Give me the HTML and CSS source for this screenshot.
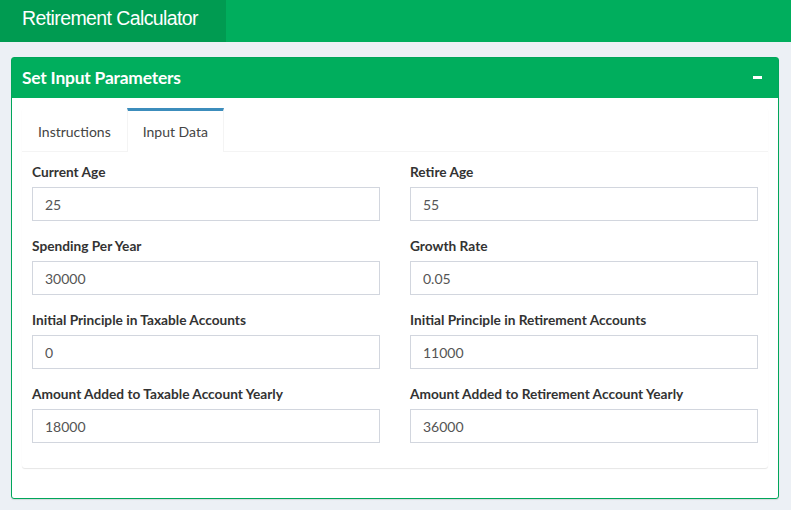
FILE: index.html
```html
<!DOCTYPE html>
<html>
<head>
<meta charset="utf-8">
<link rel="stylesheet" href="styles.css">
</head>
<body>
<header class="topbar">
  <div class="logo">Retirement Calculator</div>
  <div class="navbar"></div>
</header>
<main class="content">
  <section class="box">
    <div class="box-header">
      <h3 class="box-title">Set Input Parameters</h3>
      <span class="minus"></span>
    </div>
    <div class="box-body">
      <div class="tabs">
        <ul class="tab-nav">
          <li class="tab">Instructions</li>
          <li class="tab active">Input Data</li>
        </ul>
        <div class="tab-content">
          <div class="grid">
            <div class="field"><label>Current Age</label><input class="inp" value="25"></div>
            <div class="field"><label>Retire Age</label><input class="inp" value="55"></div>
            <div class="field"><label>Spending Per Year</label><input class="inp" value="30000"></div>
            <div class="field"><label>Growth Rate</label><input class="inp" value="0.05"></div>
            <div class="field"><label>Initial Principle in Taxable Accounts</label><input class="inp" value="0"></div>
            <div class="field"><label>Initial Principle in Retirement Accounts</label><input class="inp" value="11000"></div>
            <div class="field"><label>Amount Added to Taxable Account Yearly</label><input class="inp" value="18000"></div>
            <div class="field"><label>Amount Added to Retirement Account Yearly</label><input class="inp" value="36000"></div>
          </div>
        </div>
      </div>
    </div>
  </section>
</main>
</body>
</html>
```
FILE: styles.css
```css
* { box-sizing: border-box; }
html, body { margin: 0; padding: 0; }
body {
  background: #ecf0f5;
  font-family: "Lato", "Liberation Sans", sans-serif;
  color: #333;
  font-size: 14px;
  width: 791px;
  height: 510px;
  overflow: hidden;
}
.topbar {
  display: flex;
  height: 42px;
  background: #00ae5d;
}
.logo {
  width: 226px;
  background: #009b51;
  color: #fff;
  font-family: "Liberation Sans", sans-serif;
  font-size: 19.5px;
  font-weight: 300;
  line-height: 36px;
  padding-left: 22px;
  letter-spacing: -0.6px;
}
.navbar { flex: 1; }
.content {
  padding: 15px 12px 0 11px;
}
.box {
  border: 1px solid #00a65a;
  border-radius: 3px;
  background: #fff;
  box-shadow: 0 1px 1px rgba(0,0,0,0.1);
}
.box-header {
  background: #00ae5d;
  height: 40px;
  display: flex;
  align-items: center;
  justify-content: space-between;
  padding: 0 16px 2px 10px;
  color: #fff;
}
.box-title {
  margin: 0;
  font-size: 17.4px;
  font-weight: 700;
  letter-spacing: -0.2px;
}
.minus {
  width: 9px;
  height: 3px;
  background: #fff;
}
.box-body {
  padding: 10px 10px 30px 10px;
}
.tabs {
  background: #fff;
  border-radius: 3px;
  box-shadow: 0 1px 1px rgba(0,0,0,0.1);
}
.tab-nav {
  list-style: none;
  margin: 0;
  padding: 0;
  display: flex;
  border-bottom: 1px solid #f4f4f4;
}
.tab {
  padding: 14px 16px 10px 16px;
  line-height: 20px;
  color: #444;
  font-size: 14px;
  margin-bottom: -1px;
}
.tab.active {
  border-top: 3px solid #3c8dbc;
  padding-top: 11px;
  border-left: 1px solid #f4f4f4;
  border-right: 1px solid #f4f4f4;
  background: #fff;
  padding-left: 15px;
  padding-right: 15px;
}
.tab-content {
  padding: 10px;
}
.grid {
  display: grid;
  grid-template-columns: 348px 348px;
  column-gap: 30px;
}
.field {
  display: flex;
  flex-direction: column;
  margin-bottom: 15px;
}
label {
  font-weight: 700;
  font-size: 13.7px;
  line-height: 20px;
  margin-bottom: 5px;
  color: #333;
}
.inp {
  height: 34px;
  border: 1px solid #d2d6de;
  padding: 0 12px;
  font-family: "Lato", "Liberation Sans", sans-serif;
  font-size: 14px;
  color: #555;
  background: #fff;
  outline: none;
  width: 100%;
}
```
